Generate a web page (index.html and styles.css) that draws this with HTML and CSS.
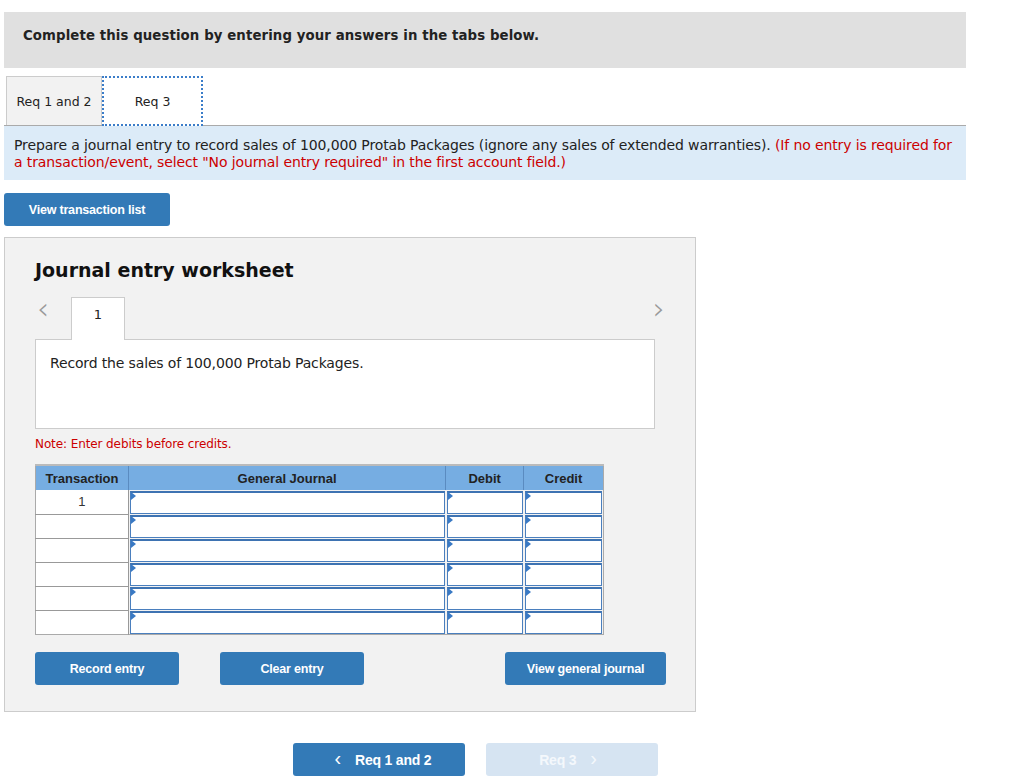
FILE: index.html
```html
<!DOCTYPE html>
<html lang="en">
<head>
  <meta charset="UTF-8" />
  <title>Journal entry worksheet</title>
  <link rel="stylesheet" href="styles.css">
</head>
<body>
  <div class="page">
    <div class="top-bar">Complete this question by entering your answers in the tabs below.</div>

    <div class="req-tabs">
      <div class="req-tab">Req 1 and 2</div>
      <div class="req-tab active">Req 3</div>
    </div>

    <div class="info-box">
      Prepare a journal entry to record sales of 100,000 Protab Packages (ignore any sales of extended warranties).
      <span class="red">(If no entry is required for a transaction/event, select "No journal entry required" in the first account field.)</span>
    </div>

    <button class="btn btn-list">View transaction list</button>

    <div class="worksheet">
      <h2>Journal entry worksheet</h2>

      <div class="entry-nav">
        <span class="arrow">&#8249;</span>
        <div class="entry-tab">1</div>
        <span class="arrow right">&#8250;</span>
      </div>
      <div class="entry-box">Record the sales of 100,000 Protab Packages.</div>

      <p class="note">Note: Enter debits before credits.</p>

      <table class="journal">
        <thead>
          <tr>
            <th class="col-tr">Transaction</th>
            <th class="col-gj">General Journal</th>
            <th class="col-dr">Debit</th>
            <th class="col-cr">Credit</th>
          </tr>
        </thead>
        <tbody id="rows"></tbody>
      </table>

      <div class="ws-buttons">
        <button class="btn btn-ws">Record entry</button>
        <button class="btn btn-ws">Clear entry</button>
        <button class="btn btn-ws wide">View general journal</button>
      </div>
    </div>

    <div class="bottom-nav">
      <button class="btn btn-nav"><span class="chev">&#8249;</span> Req 1 and 2</button>
      <button class="btn btn-nav disabled">Req 3 <span class="chev">&#8250;</span></button>
    </div>
  </div>

  <script>
    const rows = document.getElementById('rows');
    for (let i = 0; i < 6; i++) {
      const tr = document.createElement('tr');
      tr.innerHTML = `
        <td class="tr-cell">${i === 0 ? '1' : ''}</td>
        <td class="in-cell"><div class="field"></div></td>
        <td class="in-cell"><div class="field"></div></td>
        <td class="in-cell"><div class="field"></div></td>
      `;
      rows.appendChild(tr);
    }
  </script>
</body>
</html>
```

FILE: styles.css
```css
* { box-sizing: border-box; margin: 0; padding: 0; }

body {
  font-family: "DejaVu Sans", Verdana, sans-serif;
  background: #fff;
  color: #222;
}

.page {
  padding: 12px 0 0 4px;
  width: 966px;
}

.top-bar {
  background: #e0e0e0;
  height: 56px;
  padding: 16px 0 0 19px;
  font-size: 13.3px;
  font-weight: bold;
  letter-spacing: 0.1px;
}

/* tabs */
.req-tabs {
  display: flex;
  margin-top: 8px;
  padding-left: 2px;
  border-bottom: 1px solid #aaa;
  height: 50px;
}

.req-tab {
  width: 96px;
  height: 49px;
  background: #f2f2f2;
  border: 1px solid #ccc;
  border-bottom: none;
  font-size: 12.5px;
  display: flex;
  align-items: center;
  justify-content: center;
}

.req-tab.active {
  width: 101px;
  height: 50px;
  background: #fff;
  border: 2px dotted #3b7dc9;
}

.info-box {
  background: #dcebf8;
  padding: 11px 10px 0 10px;
  height: 54px;
  font-size: 14px;
  line-height: 17px;
  letter-spacing: -0.12px;
}

.red { color: #c00; }

/* buttons */
.btn {
  display: flex;
  align-items: center;
  justify-content: center;
  background: #337ab7;
  color: #fff;
  border: none;
  border-radius: 3px;
  font-family: "Liberation Sans", Arial, sans-serif;
  font-weight: bold;
  font-size: 12.5px;
  letter-spacing: -0.2px;
  height: 33px;
}

.btn-list {
  margin-top: 13px;
  width: 166px;
}

/* worksheet */
.worksheet {
  margin-top: 11px;
  width: 692px;
  height: 475px;
  background: #f2f2f2;
  border: 1px solid #ccc;
  padding: 20px 0 0 30px;
}

.worksheet h2 {
  font-size: 19px;
  font-weight: bold;
  line-height: 24px;
  color: #111;
}

.entry-nav {
  display: flex;
  align-items: flex-start;
  margin-top: 14px;
  width: 620px;
  height: 43px;
}

.arrow {
  color: #999;
  font-size: 30px;
  line-height: 30px;
  width: 36px;
  padding-left: 2px;
  font-family: "DejaVu Sans", sans-serif;
  font-weight: 200;
  margin-top: -2px;
}

.arrow.right {
  margin-left: auto;
  width: auto;
  margin-right: -10px;
}

.entry-tab {
  width: 54px;
  height: 43px;
  background: #fff;
  border: 1px solid #ccc;
  border-bottom: none;
  font-size: 13px;
  text-align: center;
  padding-top: 9px;
  position: relative;
  top: 1px;
}

.entry-box {
  width: 620px;
  height: 90px;
  background: #fff;
  border: 1px solid #ccc;
  padding: 15px 14px;
  font-size: 14px;
  letter-spacing: -0.15px;
}

.note {
  color: #c00;
  font-size: 12px;
  margin-top: 8px;
  letter-spacing: -0.1px;
}

/* journal table */
.journal {
  margin-top: 13px;
  border-collapse: collapse;
  width: 569px;
  font-family: "Liberation Sans", Arial, sans-serif;
  border: 1px solid #aaa;
  border-top: 2px solid #bbb;
}

.journal th {
  background: #76ade2;
  height: 25px;
  font-size: 13px;
  font-weight: bold;
  color: #222;
  border-right: 1px solid #5a8bc0;
}

.journal th:last-child { border-right: none; }

.col-tr { width: 93px; }
.col-gj { width: 318px; }
.col-dr { width: 78px; }
.col-cr { width: 80px; }

.journal td {
  height: 24px;
  padding: 0;
}

.tr-cell {
  background: #fff;
  text-align: center;
  font-size: 13px;
  color: #333;
  vertical-align: top;
  padding-top: 4px !important;
  border-top: 1px solid #999;
  border-right: 1px solid #999;
}

tbody tr:first-child .tr-cell { border-top: none; }

.in-cell {
  padding: 1px 1px 0 1px !important;
}

.field {
  position: relative;
  height: 23px;
  background: #fff;
  border: 1px solid #4a7fbe;
  border-top: 2px solid #3e73b2;
}

.field::before {
  content: "";
  position: absolute;
  top: -1px;
  left: 0;
  border-left: 5px solid #3979c4;
  border-top: 4px solid transparent;
  border-bottom: 4px solid transparent;
}

.ws-buttons {
  display: flex;
  margin-top: 17px;
  width: 631px;
}

.btn-ws {
  width: 144px;
  margin-right: 41px;
}

.btn-ws.wide {
  width: 161px;
  margin-left: auto;
  margin-right: 0;
}

/* bottom nav */
.bottom-nav {
  display: flex;
  gap: 21px;
  margin: 31px 0 0 289px;
}

.btn-nav {
  width: 172px;
  font-size: 14px;
  gap: 6px;
}

.btn-nav .chev {
  font-size: 20px;
  font-weight: normal;
  margin: 0 8px;
  line-height: 20px;
  position: relative;
  top: -2px;
}

.btn-nav.disabled {
  background: #d6e4f2;
  color: #f4f8fc;
}
```
